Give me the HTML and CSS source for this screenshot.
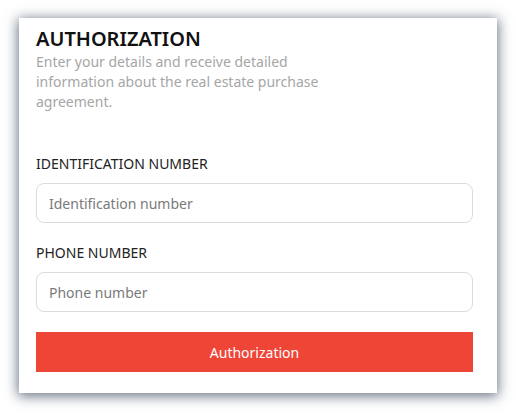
FILE: index.html
```html
<!DOCTYPE html>
<html lang="en">
<head>
<meta charset="utf-8">
<title>Authorization</title>
<link rel="stylesheet" href="styles.css">
</head>
<body>
<div class="card">
  <h1 class="title">AUTHORIZATION</h1>
  <p class="desc">Enter your details and receive detailed information about the real estate purchase agreement.</p>
  <div class="field first">
    <label class="label" for="idn">IDENTIFICATION NUMBER</label>
    <input class="input" id="idn" type="text" placeholder="Identification number">
  </div>
  <div class="field">
    <label class="label" for="phone">PHONE NUMBER</label>
    <input class="input" id="phone" type="text" placeholder="Phone number">
  </div>
  <button class="btn" type="button">Authorization</button>
</div>
</body>
</html>
```
FILE: styles.css
```css
* { box-sizing: border-box; }
html, body { margin: 0; padding: 0; background: #ffffff; }
body {
  font-family: "Noto Sans", "Open Sans", sans-serif;
  padding: 18px 19px;
}
.card {
  width: 478px;
  background: #ffffff;
  padding: 9px 24px 21px 17px;
  box-shadow: 0 2px 12px 1px rgba(45, 60, 80, 0.72);
  display: flex;
  flex-direction: column;
}
.title {
  margin: 0;
  font-size: 20px;
  line-height: 24px;
  font-weight: 600;
  color: #111111;
}
.desc {
  margin: 1px 0 0;
  max-width: 300px;
  font-size: 14px;
  line-height: 20px;
  color: #a6a6a6;
}
.field {
  display: flex;
  flex-direction: column;
  margin-top: 20px;
}
.field.first { margin-top: 42px; }
.label {
  font-size: 14px;
  line-height: 20px;
  color: #222222;
  margin-bottom: 9px;
}
.input {
  height: 40px;
  border: 1px solid #dcdcdc;
  border-radius: 8px;
  padding: 0 12px;
  font-family: inherit;
  font-size: 14px;
  color: #333333;
  background: #ffffff;
  outline: none;
}
.input::placeholder { color: #7a7a7a; }
.btn {
  margin-top: 20px;
  height: 40px;
  border: none;
  border-radius: 0;
  background: #ef4537;
  color: #ffffff;
  font-family: inherit;
  font-size: 14px;
}
```
